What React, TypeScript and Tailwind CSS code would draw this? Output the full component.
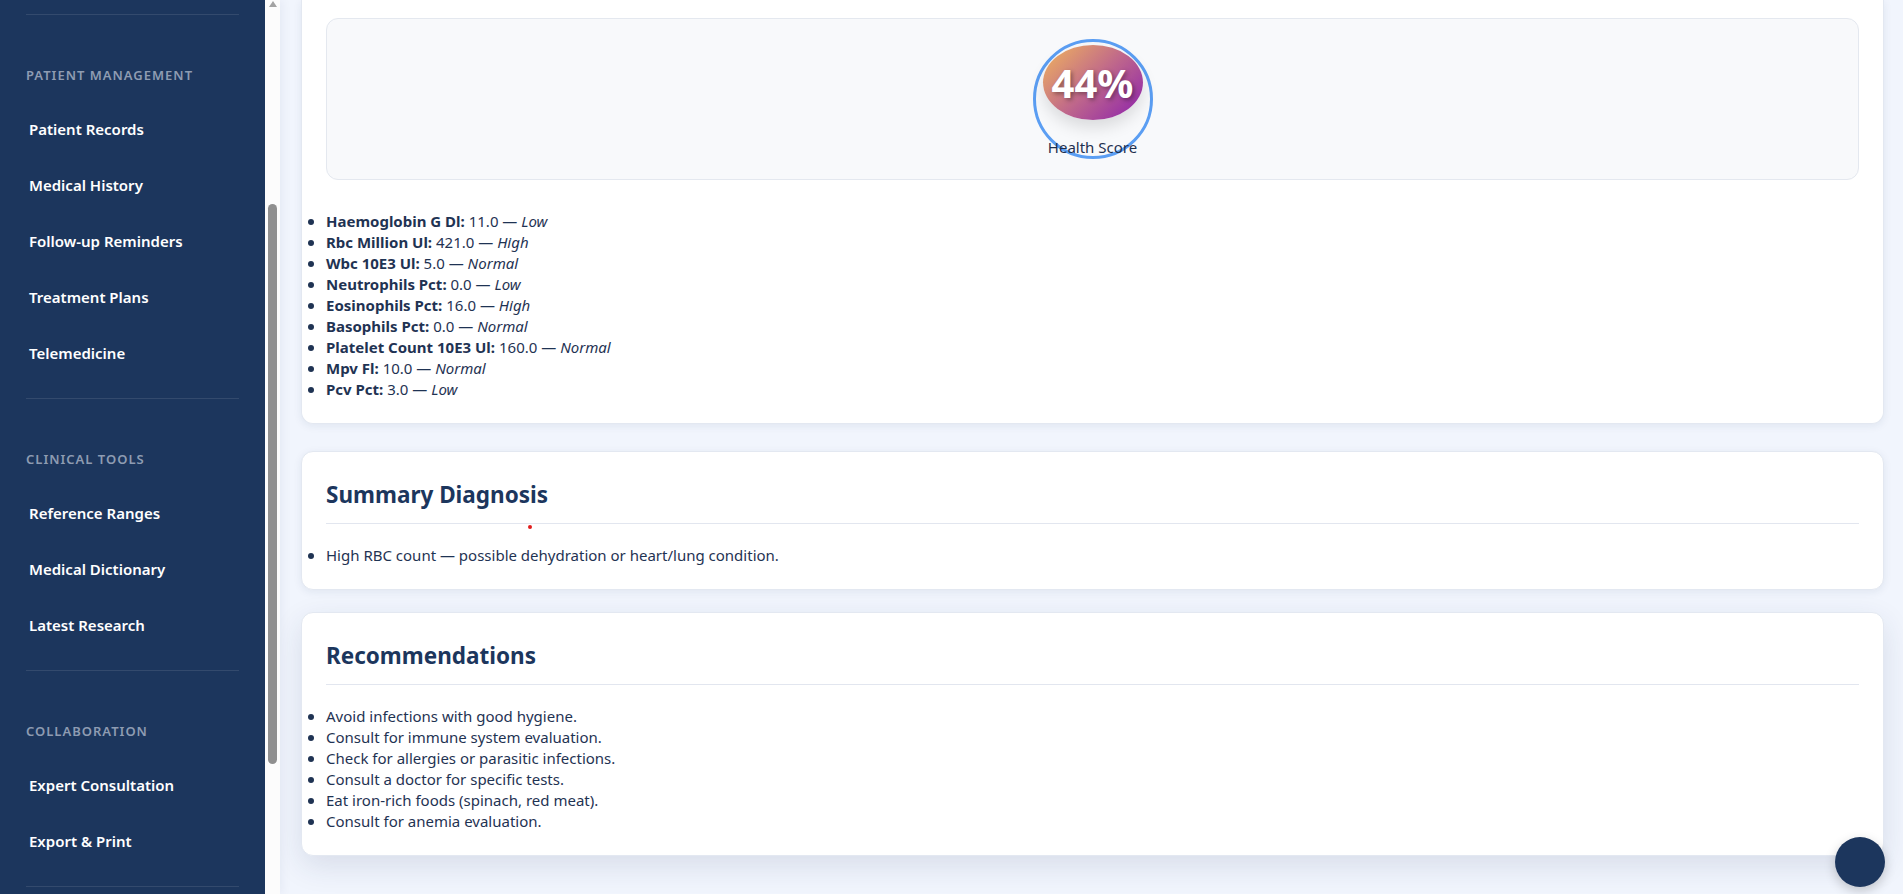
import React from "react";

const sections = [
  {
    label: "Patient Management",
    items: ["Patient Records", "Medical History", "Follow-up Reminders", "Treatment Plans", "Telemedicine"],
  },
  {
    label: "Clinical Tools",
    items: ["Reference Ranges", "Medical Dictionary", "Latest Research"],
  },
  {
    label: "Collaboration",
    items: ["Expert Consultation", "Export & Print"],
  },
];

const results = [
  { name: "Haemoglobin G Dl", value: "11.0", status: "Low" },
  { name: "Rbc Million Ul", value: "421.0", status: "High" },
  { name: "Wbc 10E3 Ul", value: "5.0", status: "Normal" },
  { name: "Neutrophils Pct", value: "0.0", status: "Low" },
  { name: "Eosinophils Pct", value: "16.0", status: "High" },
  { name: "Basophils Pct", value: "0.0", status: "Normal" },
  { name: "Platelet Count 10E3 Ul", value: "160.0", status: "Normal" },
  { name: "Mpv Fl", value: "10.0", status: "Normal" },
  { name: "Pcv Pct", value: "3.0", status: "Low" },
];

const recommendations = [
  "Avoid infections with good hygiene.",
  "Consult for immune system evaluation.",
  "Check for allergies or parasitic infections.",
  "Consult a doctor for specific tests.",
  "Eat iron-rich foods (spinach, red meat).",
  "Consult for anemia evaluation.",
];

function Bullet() {
  return <span className="-ml-[18px] mr-[12px] mt-[8px] h-[6px] w-[6px] shrink-0 rounded-full bg-[#1f3353]" />;
}

export default function App() {
  return (
    <div className="flex h-[894px] w-full overflow-hidden bg-[#f1f5fd] font-['Segoe_UI','Noto_Sans',sans-serif] text-[#1f3353]">
      {/* Sidebar */}
      <aside className="relative z-10 flex h-full w-[280px] shrink-0 shadow-[2px_0_10px_rgba(20,40,80,0.06)]">
        <nav className="flex w-[265px] flex-col bg-[#1c365d]">
          <div className="mx-[26px] mt-[14px] h-px bg-white/10" />
          {sections.map((s) => (
            <div key={s.label} className="flex flex-col">
              <div className="mt-[51px] pl-[26px] text-[13px] font-semibold uppercase leading-[18px] tracking-[1px] text-[#8e9cb2]">
                {s.label}
              </div>
              <div className="mt-[17px] flex flex-col">
                {s.items.map((it) => (
                  <a key={it} className="flex h-[56px] items-center pl-[29px] text-[15px] font-semibold text-white">
                    {it}
                  </a>
                ))}
              </div>
              <div className="mx-[26px] mt-[17px] h-px bg-white/10" />
            </div>
          ))}
        </nav>
        <div className="flex w-[15px] flex-col items-center bg-[#fcfcfc]">
          <div className="mt-[1px] h-0 w-0 border-b-[6px] border-l-[4px] border-r-[4px] border-b-[#a3a3a3] border-l-transparent border-r-transparent" />
          <div className="mt-[197px] h-[560px] w-[9px] rounded-full bg-[#8f8f8f]" />
        </div>
      </aside>

      {/* Main */}
      <main className="flex min-w-0 flex-1 flex-col pl-[21px] pr-[19px]">
        {/* Results card (scrolled) */}
        <section className="rounded-b-[12px] border border-t-0 border-[#e3e8f1] bg-white px-[24px] pb-[23px] pt-[18px] shadow-[0_2px_8px_rgba(30,50,90,0.08)]">
          <div className="flex justify-center rounded-[12px] border border-[#e4e8ef] bg-[#f8f9fb] py-[20px]">
            <div className="flex h-[120px] w-[120px] flex-col items-center rounded-full border-[3px] border-[#5b9ef3]">
              <div className="mt-[3px] flex h-[75px] w-[100px] shrink-0 items-center justify-center rounded-[50%] bg-[linear-gradient(135deg,#f2b65c_0%,#c0698a_50%,#8b1fae_100%)] shadow-[0_8px_16px_rgba(0,0,0,0.12)]">
                <span className="text-[40px] font-bold leading-none text-white [text-shadow:2px_2px_4px_rgba(0,0,0,0.35)]">
                  44%
                </span>
              </div>
              <div className="mt-[17px] whitespace-nowrap text-[15px] leading-[20px] text-[#1e3050]">Health Score</div>
            </div>
          </div>
          <ul className="mt-[31px] flex flex-col">
            {results.map((r) => (
              <li key={r.name} className="flex text-[15px] leading-[21px]">
                <Bullet />
                <span>
                  <b className="font-bold">{r.name}:</b> {r.value} — <i>{r.status}</i>
                </span>
              </li>
            ))}
          </ul>
        </section>

        {/* Summary Diagnosis */}
        <section className="relative mt-[27px] rounded-[12px] border border-[#e3e8f1] bg-white px-[24px] pb-[23px] pt-[24px] shadow-[0_2px_8px_rgba(30,50,90,0.08)]">
          <h2 className="border-b border-[#e2e6ef] pb-[9px] text-[22.5px] font-bold leading-[38px] text-[#1c365d]">
            Summary Diagnosis
          </h2>
          <ul className="mt-[21px] flex flex-col">
            <li className="flex text-[15px] leading-[21px]">
              <Bullet />
              <span>High RBC count — possible dehydration or heart/lung condition.</span>
            </li>
          </ul>
          <span className="absolute left-[226px] top-[73px] h-[4px] w-[4px] rounded-full bg-[#e11d1d]" />
        </section>

        {/* Recommendations */}
        <section className="mt-[22px] rounded-[12px] border border-[#e3e8f1] bg-white px-[24px] pb-[23px] pt-[24px] shadow-[0_10px_30px_rgba(30,50,90,0.12)]">
          <h2 className="border-b border-[#e2e6ef] pb-[9px] text-[22.5px] font-bold leading-[38px] text-[#1c365d]">
            Recommendations
          </h2>
          <ul className="mt-[21px] flex flex-col">
            {recommendations.map((r) => (
              <li key={r} className="flex text-[15px] leading-[21px]">
                <Bullet />
                <span>{r}</span>
              </li>
            ))}
          </ul>
        </section>
      </main>

      <button className="fixed bottom-[7px] right-[18px] h-[50px] w-[50px] rounded-full bg-[#1c365d] shadow-[0_4px_12px_rgba(0,0,0,0.2)]" />
    </div>
  );
}
